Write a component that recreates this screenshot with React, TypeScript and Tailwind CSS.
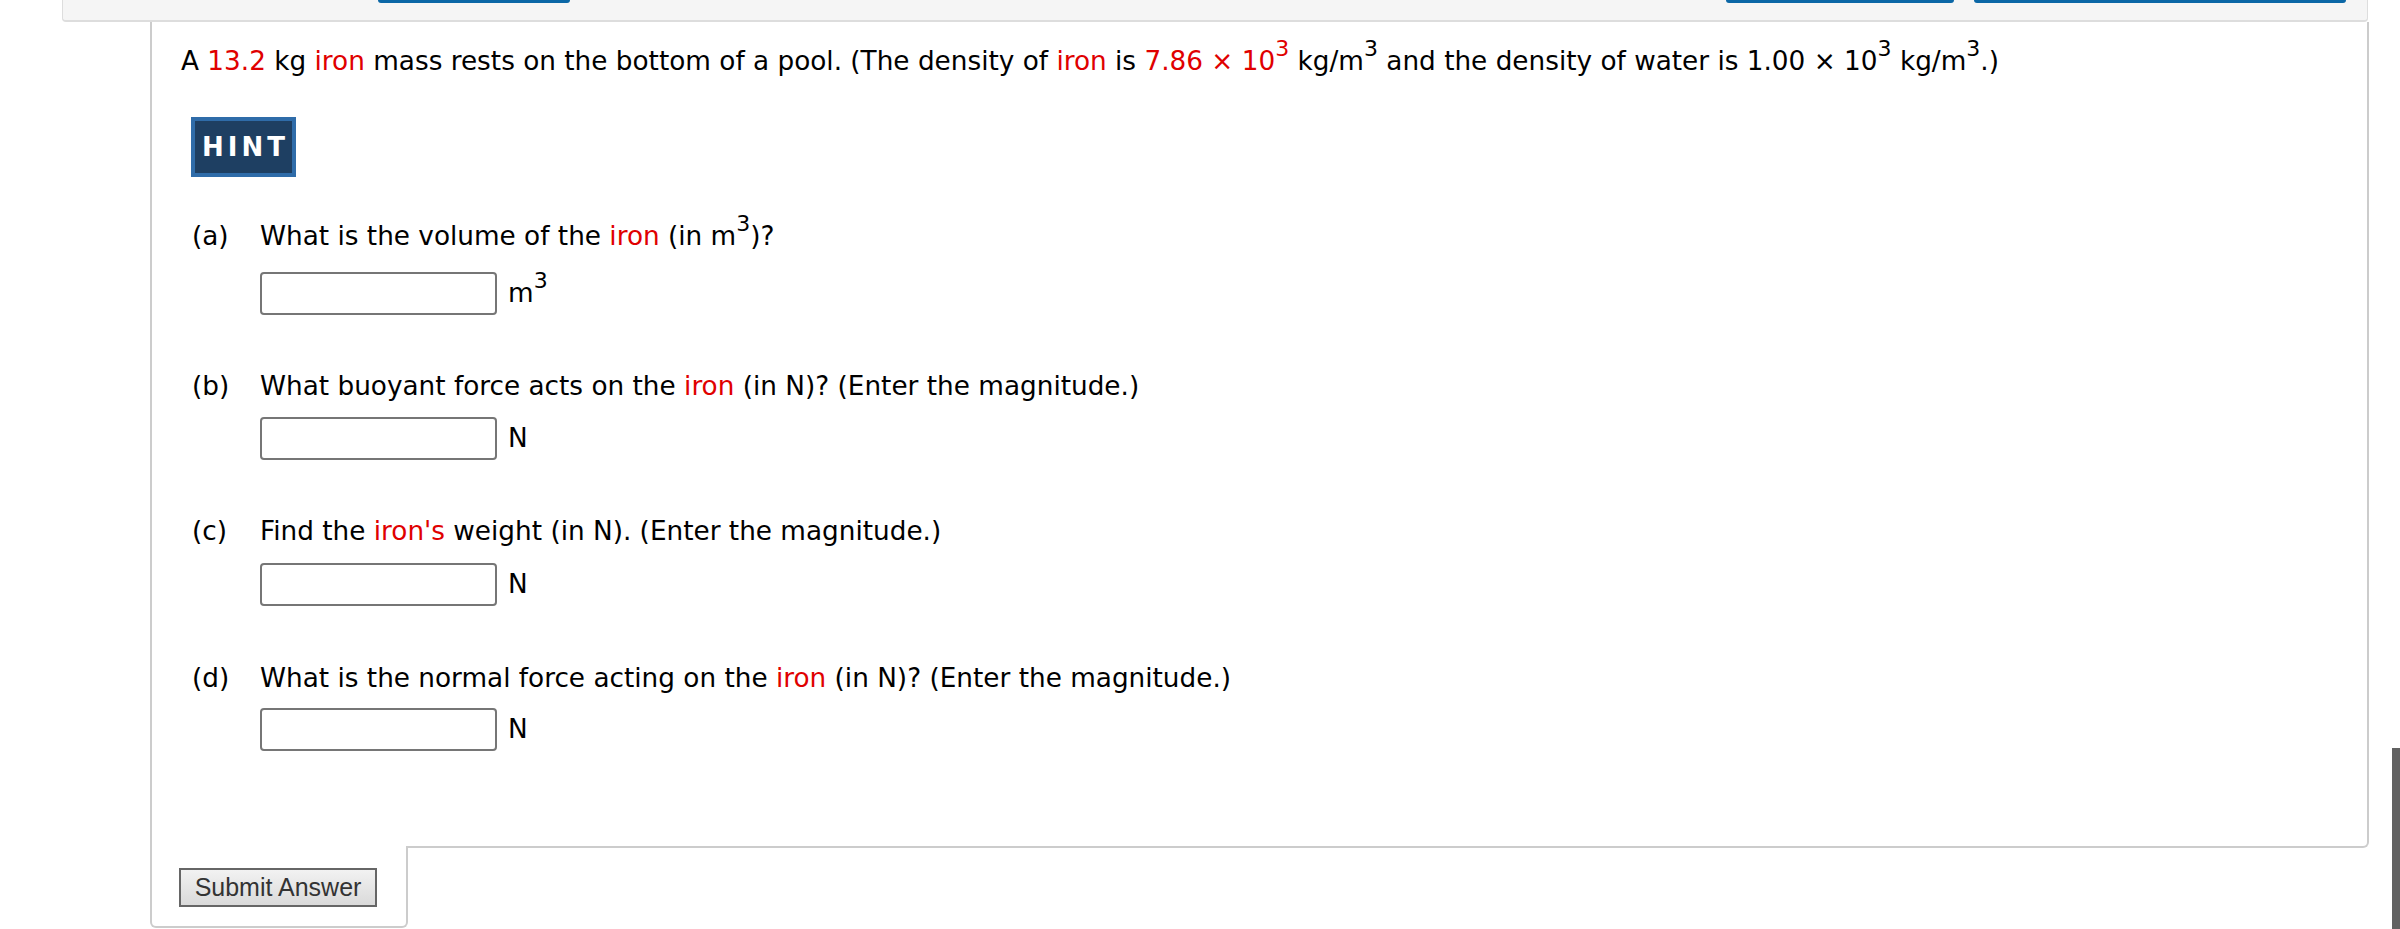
import type { ReactNode } from 'react';

const Red = ({ children }: { children: ReactNode }) => <span className="text-[#e00000]">{children}</span>;

const Sup = ({ children }: { children: ReactNode }) => (
  <sup className="relative -top-[14px] text-[22px] leading-none align-baseline">{children}</sup>
);

interface PartProps {
  label: string;
  children: ReactNode;
  unit: ReactNode;
  className: string;
  inputClassName: string;
}

function Part({ label, children, unit, className, inputClassName }: PartProps) {
  return (
    <div className={className}>
      <p className="flex leading-[39px] whitespace-nowrap">
        <span className="w-[79px] pl-[11px] shrink-0">{label}</span>
        <span>{children}</span>
      </p>
      <div className={`flex items-center ml-[79px] ${inputClassName}`}>
        <input
          type="text"
          aria-label={label}
          className="w-[237px] h-[43px] border-2 border-[#767676] rounded-[4px] bg-white outline-none"
        />
        <span className="ml-[11px] leading-[39px]">{unit}</span>
      </div>
    </div>
  );
}

export default function App() {
  return (
    <div className="w-[2400px] h-[929px] bg-white relative overflow-hidden text-black text-[26.3px] font-['DejaVu_Sans',Verdana,sans-serif]">
      {/* top toolbar, only its lower edge is visible */}
      <div className="ml-[62px] w-[2306px] h-[22px] box-border bg-[#f5f5f5] border-x border-b-2 border-[#dddddd] rounded-b-[4px] flex items-start">
        <div className="ml-[315px] w-[192px] h-[3px] bg-[#0b67a6] rounded-b-[4px]" />
        <div className="ml-[1156px] w-[228px] h-[3px] bg-[#0b67a6] rounded-b-[4px]" />
        <div className="ml-[20px] w-[372px] h-[3px] bg-[#0b67a6] rounded-b-[4px]" />
      </div>

      {/* question panel */}
      <div className="ml-[150px] w-[2219px] h-[826px] box-border border-x-2 border-b-2 border-[#cccccc] rounded-br-[6px] pt-[20px] pl-[29px]">
        <p className="leading-[39px] whitespace-nowrap">
          A <Red>13.2</Red> kg <Red>iron</Red> mass rests on the bottom of a pool. (The density of <Red>iron</Red> is{' '}
          <Red>
            7.86 × 10<Sup>3</Sup>
          </Red>{' '}
          kg/m<Sup>3</Sup> and the density of water is 1.00 × 10<Sup>3</Sup> kg/m<Sup>3</Sup>.)
        </p>

        <button className="ml-[10px] mt-[36px] w-[105px] h-[60px] box-border border-4 border-[#2f6ca9] bg-[#1e3f62] flex items-center justify-center text-white font-bold text-[26px] tracking-[4px] pl-[4px]">
          HINT
        </button>

        <Part
          label="(a)"
          className="mt-[40px]"
          inputClassName="mt-[16px]"
          unit={
            <>
              m<Sup>3</Sup>
            </>
          }
        >
          What is the volume of the <Red>iron</Red> (in m<Sup>3</Sup>)?
        </Part>

        <Part label="(b)" className="mt-[52px]" inputClassName="mt-[11px]" unit="N">
          What buoyant force acts on the <Red>iron</Red> (in N)? (Enter the magnitude.)
        </Part>

        <Part label="(c)" className="mt-[52px]" inputClassName="mt-[12px]" unit="N">
          Find the <Red>iron's</Red> weight (in N). (Enter the magnitude.)
        </Part>

        <Part label="(d)" className="mt-[53px]" inputClassName="mt-[10px]" unit="N">
          What is the normal force acting on the <Red>iron</Red> (in N)? (Enter the magnitude.)
        </Part>
      </div>

      {/* submit tab */}
      <div className="relative ml-[150px] -mt-[2px] w-[258px] h-[82px] box-border bg-white border-x-2 border-b-2 border-[#cccccc] rounded-b-[6px] pt-[22px] pl-[27px]">
        <button className="w-[198px] h-[39px] box-border border-2 border-[#666666] bg-linear-to-b from-[#f2f2f2] to-[#dadada] text-[#333333] text-[25px] leading-none font-['Liberation_Sans',Arial,sans-serif]">
          Submit Answer
        </button>
      </div>

      {/* page scrollbar thumb */}
      <div className="absolute right-0 top-[748px] w-[8px] h-[181px] bg-[#616161]" />
    </div>
  );
}
